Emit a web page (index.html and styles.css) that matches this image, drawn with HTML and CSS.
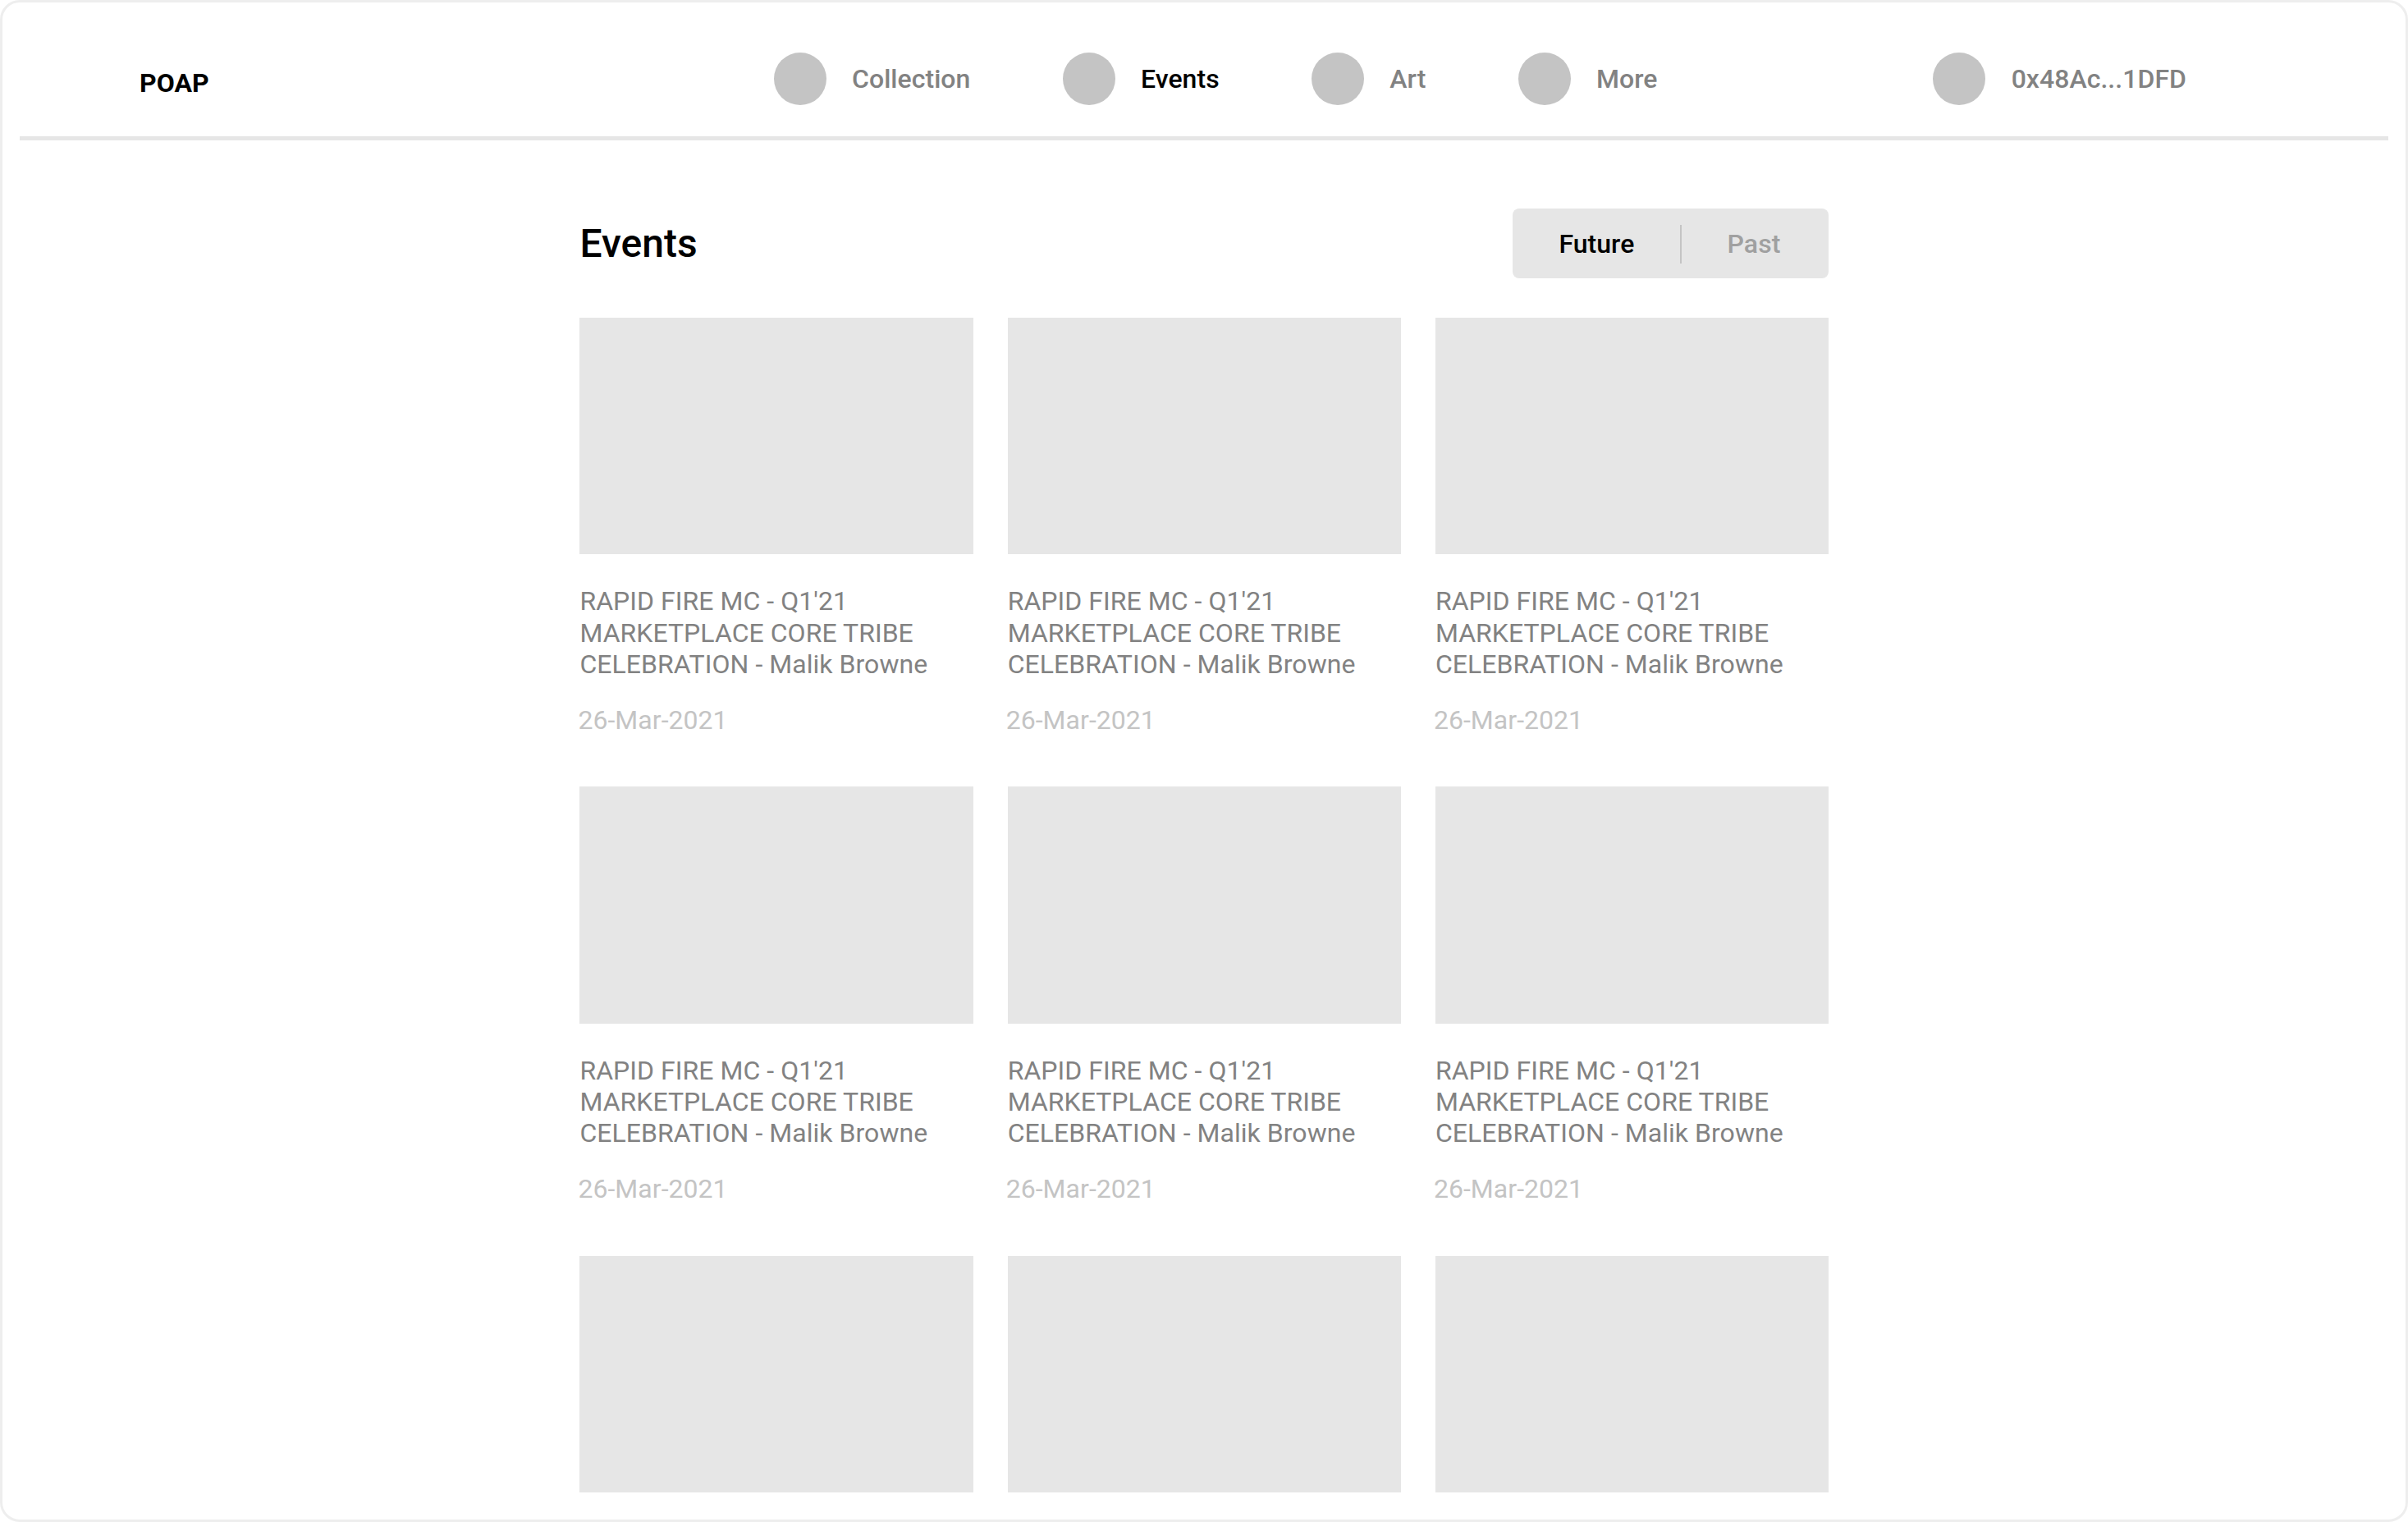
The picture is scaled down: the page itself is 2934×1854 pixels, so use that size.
FILE: index.html
```html
<!DOCTYPE html>
<html lang="en">
<head>
<meta charset="utf-8">
<title>POAP Events</title>
<link rel="stylesheet" href="styles.css">
</head>
<body>
<div class="frame">
  <header class="header">
    <a class="brand">POAP</a>
    <nav class="nav">
      <a class="nav-item"><span class="dot"></span>Collection</a>
      <a class="nav-item active"><span class="dot"></span>Events</a>
      <a class="nav-item"><span class="dot"></span>Art</a>
      <a class="nav-item"><span class="dot"></span>More</a>
    </nav>
    <a class="nav-item account"><span class="dot"></span>0x48Ac...1DFD</a>
  </header>
  <main class="content">
    <div class="heading">
      <h1 class="title">Events</h1>
      <div class="toggle">
        <span class="option selected">Future</span>
        <span class="divider"></span>
        <span class="option">Past</span>
      </div>
    </div>
    <section class="grid">
      <article class="card"><div class="thumb"></div><h2 class="name">RAPID FIRE MC - Q1'21 MARKETPLACE CORE TRIBE CELEBRATION - Malik Browne</h2><time class="date">26-Mar-2021</time></article>
      <article class="card"><div class="thumb"></div><h2 class="name">RAPID FIRE MC - Q1'21 MARKETPLACE CORE TRIBE CELEBRATION - Malik Browne</h2><time class="date">26-Mar-2021</time></article>
      <article class="card"><div class="thumb"></div><h2 class="name">RAPID FIRE MC - Q1'21 MARKETPLACE CORE TRIBE CELEBRATION - Malik Browne</h2><time class="date">26-Mar-2021</time></article>
      <article class="card"><div class="thumb"></div><h2 class="name">RAPID FIRE MC - Q1'21 MARKETPLACE CORE TRIBE CELEBRATION - Malik Browne</h2><time class="date">26-Mar-2021</time></article>
      <article class="card"><div class="thumb"></div><h2 class="name">RAPID FIRE MC - Q1'21 MARKETPLACE CORE TRIBE CELEBRATION - Malik Browne</h2><time class="date">26-Mar-2021</time></article>
      <article class="card"><div class="thumb"></div><h2 class="name">RAPID FIRE MC - Q1'21 MARKETPLACE CORE TRIBE CELEBRATION - Malik Browne</h2><time class="date">26-Mar-2021</time></article>
      <article class="card"><div class="thumb"></div></article>
      <article class="card"><div class="thumb"></div></article>
      <article class="card"><div class="thumb"></div></article>
    </section>
  </main>
</div>
</body>
</html>
```
FILE: styles.css
```css
* {
  box-sizing: border-box;
}

body {
  margin: 0;
  background: #fff;
  font-family: Roboto, "Liberation Sans", sans-serif;
  font-size: 32px;
  line-height: 38px;
  letter-spacing: 0.04px;
  color: #828282;
}

.frame {
  height: 1854px;
  padding: 0 21px;
  border: 3px solid #eee;
  border-radius: 24px;
  overflow: hidden;
}

.header {
  display: flex;
  align-items: flex-start;
  height: 168px;
  padding: 61px 0 0 146px;
  border-bottom: 5px solid #e6e6e6;
  font-weight: 500;
}

.brand {
  width: 773px;
  padding-top: 18px;
  font-weight: 700;
  color: #000;
}

.nav {
  display: flex;
  gap: 112.6px;
}

.nav-item {
  display: flex;
  align-items: center;
  gap: 31px;
}

.active {
  color: #000;
}

.account {
  gap: 32px;
  margin: 0 246px 0 auto;
}

.dot {
  width: 64px;
  height: 64px;
  border-radius: 50%;
  background: #c4c4c4;
}

.content {
  width: 1522px;
  margin: 0 0 0 682.4px;
  padding-top: 83px;
}

.heading {
  display: flex;
  align-items: center;
  justify-content: space-between;
  height: 85px;
  margin-bottom: 48px;
}

.title {
  margin: 0;
  padding-top: 1px;
  font-size: 48px;
  font-weight: 500;
  line-height: 56px;
  color: #000;
}

.toggle {
  display: flex;
  align-items: center;
  width: 385px;
  height: 85px;
  padding: 1px 59px 0 56px;
  justify-content: space-between;
  border-radius: 8px;
  background: #e6e6e6;
  font-weight: 500;
}

.option {
  color: #a0a0a0;
}

.selected {
  color: #000;
}

.divider {
  width: 2px;
  height: 47px;
  background: #c4c4c4;
}

.grid {
  display: grid;
  grid-template-columns: repeat(3, 479.5px);
  grid-auto-rows: 571.3px;
  justify-content: space-between;
}

.card {
  display: flex;
  flex-direction: column;
}

.thumb {
  height: 288.4px;
  background: #e6e6e6;
}

.name {
  margin: 38px 0 30px;
  font-size: 32px;
  font-weight: 400;
  line-height: 38.15px;
}

.date {
  margin-left: -2px;
  color: #c4c4c4;
}
```
